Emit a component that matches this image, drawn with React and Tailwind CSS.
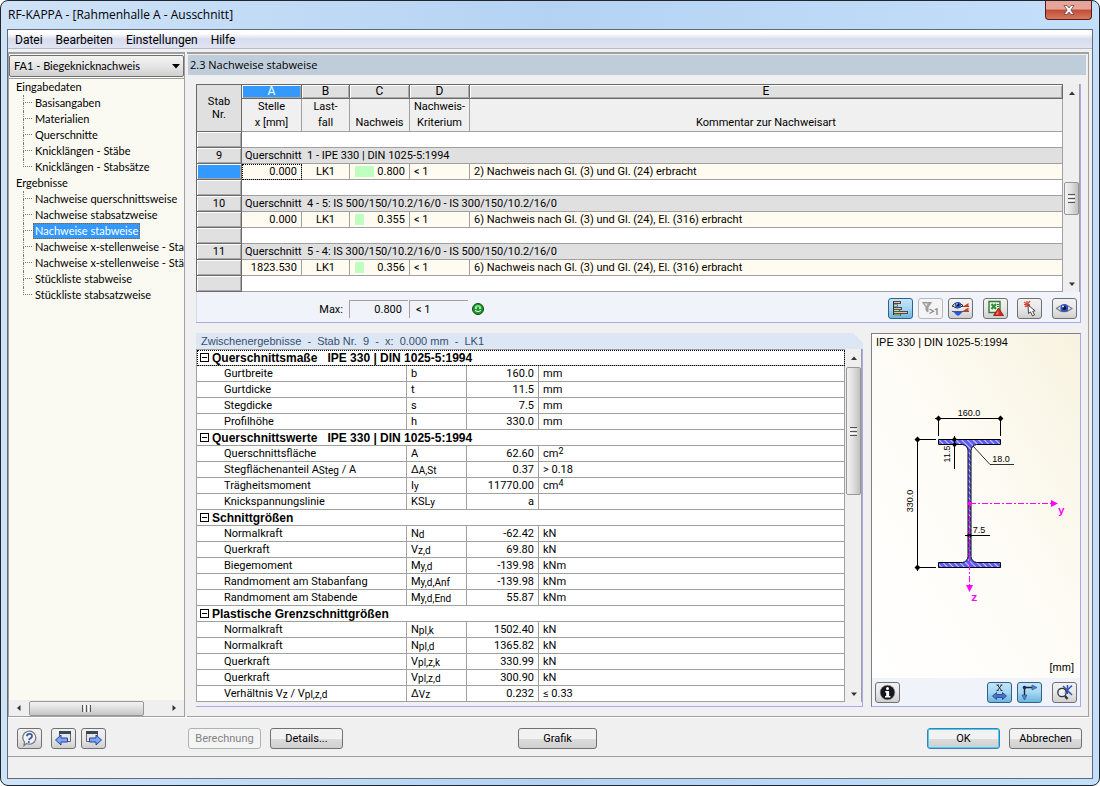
import React, { useState } from "react";
import clsx from "clsx";

const inputPages = [
  "Basisangaben",
  "Materialien",
  "Querschnitte",
  "Knicklängen - Stäbe",
  "Knicklängen - Stabsätze",
];

const resultPages = [
  "Nachweise querschnittsweise",
  "Nachweise stabsatzweise",
  "Nachweise stabweise",
  "Nachweise x-stellenweise - Stab",
  "Nachweise x-stellenweise - Stäb",
  "Stückliste stabweise",
  "Stückliste stabsatzweise",
];

const members = [
  {
    nr: 9,
    section: "1 - IPE 330 | DIN 1025-5:1994",
    x: "0.000",
    lc: "LK1",
    ratio: "0.800",
    comment: "2) Nachweis nach Gl. (3) und Gl. (24) erbracht",
    active: true,
  },
  {
    nr: 10,
    section: "4 - 5: IS 500/150/10.2/16/0 - IS 300/150/10.2/16/0",
    x: "0.000",
    lc: "LK1",
    ratio: "0.355",
    comment: "6) Nachweis nach Gl. (3) und Gl. (24), El. (316) erbracht",
  },
  {
    nr: 11,
    section: "5 - 4: IS 300/150/10.2/16/0 - IS 500/150/10.2/16/0",
    x: "1823.530",
    lc: "LK1",
    ratio: "0.356",
    comment: "6) Nachweis nach Gl. (3) und Gl. (24), El. (316) erbracht",
  },
];

function Sub({ children }) {
  return <span className="relative top-px text-[10px] leading-none">{children}</span>;
}

function Sup({ children }) {
  return <span className="relative bottom-[3px] text-[9px] leading-none">{children}</span>;
}

const details = [
  {
    title: "Querschnittsmaße",
    extra: "IPE 330 | DIN 1025-5:1994",
    rows: [
      ["Gurtbreite", "b", "160.0", "mm"],
      ["Gurtdicke", "t", "11.5", "mm"],
      ["Stegdicke", "s", "7.5", "mm"],
      ["Profilhöhe", "h", "330.0", "mm"],
    ],
  },
  {
    title: "Querschnittswerte",
    extra: "IPE 330 | DIN 1025-5:1994",
    rows: [
      ["Querschnittsfläche", "A", "62.60", <>cm<Sup>2</Sup></>],
      [<>Stegflächenanteil A<Sub>Steg</Sub> / A</>, <>Δ<Sub>A,St</Sub></>, "0.37", "> 0.18"],
      ["Trägheitsmoment", <>I<Sub>y</Sub></>, "11770.00", <>cm<Sup>4</Sup></>],
      ["Knickspannungslinie", <>KSL<Sub>y</Sub></>, "a", ""],
    ],
  },
  {
    title: "Schnittgrößen",
    rows: [
      ["Normalkraft", <>N<Sub>d</Sub></>, "-62.42", "kN"],
      ["Querkraft", <>V<Sub>z,d</Sub></>, "69.80", "kN"],
      ["Biegemoment", <>M<Sub>y,d</Sub></>, "-139.98", "kNm"],
      ["Randmoment am Stabanfang", <>M<Sub>y,d,Anf</Sub></>, "-139.98", "kNm"],
      ["Randmoment am Stabende", <>M<Sub>y,d,End</Sub></>, "55.87", "kNm"],
    ],
  },
  {
    title: "Plastische Grenzschnittgrößen",
    rows: [
      ["Normalkraft", <>N<Sub>pl,k</Sub></>, "1502.40", "kN"],
      ["Normalkraft", <>N<Sub>pl,d</Sub></>, "1365.82", "kN"],
      ["Querkraft", <>V<Sub>pl,z,k</Sub></>, "330.99", "kN"],
      ["Querkraft", <>V<Sub>pl,z,d</Sub></>, "300.90", "kN"],
      [<>Verhältnis V<Sub>z</Sub> / V<Sub>pl,z,d</Sub></>, <>Δ<Sub>Vz</Sub></>, "0.232", "≤ 0.33"],
    ],
  },
];

/* ---------- icons ---------- */

function Icon({ children }) {
  return (
    <svg width="19" height="17" viewBox="0 0 19 17" aria-hidden="true" className="shrink-0">
      {children}
    </svg>
  );
}

const icons = {
  bars: (
    <Icon>
      <path d="M2.500 1v14" stroke="#333" />
      <path d="M3 2.500h7M3 8.500h8M3 12.500h14" stroke="#4a4a4a" strokeWidth="3" />
      <path d="M3 2.500h6M3 8.500h7M3 12.500h13" stroke="#f6b9a8" />
      <path d="M3 5.500h4M3 10.500h6M3 15h7" stroke="#4a6a4a" strokeWidth="2" />
      <path d="M3 5.500h3M3 10.500h5M3 15h6" stroke="#a8e8b0" />
    </Icon>
  ),
  filter: (
    <Icon>
      <path d="M1.500 2.500h9L7 7v5L5 10.500V7z" fill="#a5a5a5" stroke="#999" />
      <path d="M3.500 3.500h3L5.500 6z" fill="#eee" />
      <path d="M8.500 9l4 2.200-4 2.300" fill="none" stroke="#8a8a8a" strokeWidth="1.300" />
      <text x="13" y="15" fontSize="9" fontWeight="bold" fill="#8a8a8a">
        1
      </text>
    </Icon>
  ),
  eyeDiagram: (
    <Icon>
      <path d="M1 6.500h17M1 11.500h17" stroke="#333" strokeWidth=".8" />
      <path d="M12 6.500L17.500 3v3.500zM11 11.500l6.500-4v4z" fill="#d83a28" />
      <path d="M2 11.500h10L8 15.500H6z" fill="#2a56d8" />
      <path d="M1.500 5.500Q6 0 12 5.500 6 10.500 1.500 5.500z" fill="#dce8fa" stroke="#222" />
      <circle cx="7" cy="5" r="3" fill="#2457c8" />
      <circle cx="7" cy="5" r="1.300" fill="#0a0a28" />
      <circle cx="6" cy="4" r=".7" fill="#fff" />
    </Icon>
  ),
  excel: (
    <Icon>
      <path d="M3 1.500h11v11H3z" fill="#edf6ea" stroke="#2f7a35" strokeWidth="1.400" />
      <path d="M5.500 4l4.500 5M10 4L5.500 9" stroke="#2f8a38" strokeWidth="2" />
      <path d="M11 4.500h2M11 6.500h2" stroke="#2f7a35" />
      <path d="M12.500 8l5 7.500h-10z" fill="#d82a1a" stroke="#8a1208" strokeWidth=".8" />
      <path d="M9.500 14.500l3-4.500v4.500z" fill="#f3745e" />
    </Icon>
  ),
  pick: (
    <Icon>
      <path d="M4 2l6 4M10 1L5 7M4 4.500h6M7 1v6" stroke="#e04535" strokeWidth="1.200" />
      <path d="M8 5l.5 8.500 2-1.600 2 4 2-1-1.800-3.600 2.400-.5z" fill="#fff" stroke="#333" strokeWidth=".9" />
    </Icon>
  ),
  eye: (
    <Icon>
      <path d="M1.500 8.500Q9 1.500 17 8.500 9 15 1.500 8.500z" fill="#e6eaf5" stroke="#777a82" strokeWidth="1.100" />
      <circle cx="9.300" cy="8" r="4" fill="#3151bd" />
      <circle cx="9.300" cy="8" r="1.900" fill="#11152f" />
      <circle cx="8" cy="6.500" r="1" fill="#dfe8ff" />
    </Icon>
  ),
  info: (
    <Icon>
      <circle cx="9.500" cy="8.500" r="7.300" fill="#15171c" stroke="#888" strokeWidth=".6" />
      <circle cx="9.500" cy="4.600" r="1.500" fill="#fff" />
      <path d="M7.200 7h3.900v5h1.300v1.600H7V12h1.200V8.500H7.200z" fill="#fff" />
    </Icon>
  ),
  dimension: (
    <Icon>
      <path d="M7.500 1l4 5.500M11.500 1l-4 5.500M6.500 1H9M10.500 1h2M6.500 6.500h2M10.500 6.500h2" stroke="#222" strokeWidth=".9" />
      <path d="M2.500 12l4-3.500v2h6v-2l4 3.500-4 3.500v-2h-6v2z" fill="#4a70c8" stroke="#22418f" strokeWidth=".8" />
    </Icon>
  ),
  axes: (
    <Icon>
      <path d="M4.500 3.500H14M4.500 3.500V13" stroke="#222" strokeWidth="1.400" fill="none" />
      <path d="M12 1l5 2.500L12 6zM2 11l2.500 5L7 11z" fill="#4b83d8" stroke="#31538f" strokeWidth=".7" />
      <circle cx="4.500" cy="3.500" r="1.800" fill="#122b70" />
    </Icon>
  ),
  zoomAll: (
    <Icon>
      <path d="M8 2l9 9M17 1.500l-8 8M12.500 1v9" stroke="#3158b8" strokeWidth="1.600" />
      <circle cx="7" cy="8.500" r="4.200" fill="#e9f1fb" fillOpacity=".8" stroke="#333" strokeWidth="1.300" />
      <path d="M5 9l3-3" stroke="#fff" strokeWidth="1.400" />
      <path d="M10 12l2.500 3" stroke="#333" strokeWidth="2.400" />
    </Icon>
  ),
  help: (
    <Icon>
      <path d="M4 15.500l2.500-2A6.500 6.500 0 1 0 4.500 12z" fill="#f0f3f9" stroke="#70747c" strokeWidth="1.200" />
      <path d="M7 6.200Q7 3.800 9.500 3.800T12 6q0 1.400-1.400 2.200T9 10" fill="none" stroke="#3a5a98" strokeWidth="1.800" />
      <circle cx="8.800" cy="12" r="1.100" fill="#3a5a98" />
    </Icon>
  ),
  previous: (
    <Icon>
      <path d="M5.500 1.500h11v10h-11z" fill="#e4e6ea" stroke="#666" />
      <path d="M5 1h12v3H5z" fill="#3c4656" />
      <path d="M1.500 10l5.500-5v3h6.500v4H7v3z" fill="#7fa5f2" stroke="#2343a0" />
    </Icon>
  ),
  next: (
    <Icon>
      <path d="M2.500 1.500h11v10h-11z" fill="#e4e6ea" stroke="#666" />
      <path d="M2 1h12v3H2z" fill="#3c4656" />
      <path d="M17.500 10L12 5v3H5.500v4H12v3z" fill="#7fa5f2" stroke="#2343a0" />
    </Icon>
  ),
};

function IconButton({ label, icon, pressed, disabled, className }) {
  return (
    <button
      aria-label={label}
      aria-pressed={pressed}
      disabled={disabled}
      className={clsx(
        "flex h-[21px] w-[25px] shrink-0 items-center justify-center rounded-[3px] border",
        pressed
          ? "border-[#2c628b] bg-linear-to-b from-[#c5e4f7] via-[#a5d6f2] to-[#6cb5dd]"
          : disabled
            ? "border-[#b5b8bc] bg-[#f4f4f4]"
            : "border-[#707070] bg-linear-to-b from-[#f2f2f2] via-[#e8e8e8] to-[#cfcfcf]",
        className,
      )}
    >
      {icons[icon]}
    </button>
  );
}

function PushButton({ children, disabled, primary, className }) {
  return (
    <button
      disabled={disabled}
      className={clsx(
        "h-[21px] shrink-0 rounded-[3px] border leading-[19px]",
        disabled
          ? "border-[#adb2b5] bg-[#f4f4f4] text-[#838383]"
          : "bg-linear-to-b from-[#f2f2f2] from-50% via-[#dddddd] via-50% to-[#cfcfcf]",
        primary && "border-[#3c7fb1] ring-1 ring-[#48d0f4] ring-inset",
        !disabled && !primary && "border-[#707070]",
        className,
      )}
    >
      {children}
    </button>
  );
}

/* ---------- scroll bars ---------- */

function Arrow({ dir }) {
  const paths = {
    up: "M1 6l3-3.500 3 3.500z",
    down: "M1 2.500h6L4 6z",
    left: "M5.500 1v6L2 4z",
    right: "M2.500 1v6L6 4z",
  };
  return (
    <svg width="8" height="8" viewBox="0 0 8 8" aria-hidden="true">
      <path d={paths[dir]} fill="#333" />
    </svg>
  );
}

function VerticalScroll({ before, thumb }) {
  return (
    <div className="flex w-[17px] shrink-0 flex-col items-center border-r border-[#a0a0a0] bg-[#efefef] pl-px">
      <button aria-label="Nach oben" className="flex h-[17px] w-full items-center justify-center">
        <Arrow dir="up" />
      </button>
      <div className={clsx("w-full", before)} />
      <div
        className={clsx(
          "flex w-full shrink-0 flex-col items-center justify-center gap-px rounded-[2px] border border-[#979797] bg-linear-to-r from-[#f3f3f3] via-[#dedede] to-[#c0c0c0]",
          thumb,
        )}
      >
        <i className="h-px w-[7px] bg-[#555]" />
        <i className="h-px w-[7px] bg-white" />
        <i className="h-px w-[7px] bg-[#555]" />
        <i className="h-px w-[7px] bg-white" />
        <i className="h-px w-[7px] bg-[#555]" />
      </div>
      <div className="flex-1" />
      <button aria-label="Nach unten" className="flex h-[17px] w-full items-center justify-center">
        <Arrow dir="down" />
      </button>
    </div>
  );
}

/* ---------- navigation ---------- */

function TreeGroup({ title, pages, current, onSelect }) {
  return (
    <li>
      <p className="h-4 pl-[7px] leading-4">{title}</p>
      <ul>
        {pages.map((page, i) => (
          <li key={page} className="flex h-4 pl-[14px]">
            <span className="mr-px w-[9px] shrink-0">
              <i className="block h-2 border-b border-l border-dotted border-[#777]" />
              {i < pages.length - 1 && <i className="block h-2 border-l border-dotted border-[#777]" />}
            </span>
            <a
              href="#"
              onClick={() => onSelect(page)}
              className={clsx(
                "border px-px leading-[14px] whitespace-nowrap",
                page === current
                  ? "border-dotted border-[#a05a10] bg-[#3399ff] text-white"
                  : "border-transparent",
              )}
            >
              {page}
            </a>
          </li>
        ))}
      </ul>
    </li>
  );
}

function Sidebar() {
  const [current, setCurrent] = useState("Nachweise stabweise");
  return (
    <nav className="flex w-[177px] shrink-0 flex-col border border-t-2 border-[#a0a0a0] bg-[#fafaf2] font-[Lato,'Liberation_Sans',sans-serif]">
      <div className="relative mt-px">
        <select
          aria-label="Bemessungsfall"
          className="h-[22px] w-full appearance-none rounded-[2px] border border-[#707070] bg-linear-to-b from-[#f3f3f3] via-[#e6e6e6] to-[#d0d0d0] pl-1"
        >
          <option>FA1 - Biegeknicknachweis</option>
        </select>
        <svg className="pointer-events-none absolute top-[9px] right-[4px]" width="8" height="5" viewBox="0 0 8 5" aria-hidden="true">
          <path d="M0 0h8L4 4.500z" fill="#000" />
        </svg>
      </div>
      <ul className="mt-px flex-1 overflow-hidden border-t border-[#a0a0a0]">
        <TreeGroup title="Eingabedaten" pages={inputPages} current={current} onSelect={setCurrent} />
        <TreeGroup title="Ergebnisse" pages={resultPages} current={current} onSelect={setCurrent} />
      </ul>
      <div className="flex h-4 items-center bg-[#efefef]">
        <button aria-label="Nach links" className="flex h-full w-5 items-center justify-center">
          <Arrow dir="left" />
        </button>
        <div className="flex h-[15px] w-[115px] items-center justify-center gap-px rounded-[2px] border border-[#979797] bg-linear-to-b from-[#f3f3f3] via-[#dedede] to-[#c6c6c6]">
          <i className="h-[7px] w-px bg-[#555]" />
          <i className="h-[7px] w-px bg-white" />
          <i className="h-[7px] w-px bg-[#555]" />
          <i className="h-[7px] w-px bg-white" />
          <i className="h-[7px] w-px bg-[#555]" />
        </div>
        <div className="flex-1" />
        <button aria-label="Nach rechts" className="flex h-full w-5 items-center justify-center">
          <Arrow dir="right" />
        </button>
      </div>
    </nav>
  );
}

/* ---------- result table ---------- */

const line = "border-r border-b border-[#a0a0a0]";
const rowHead =
  "h-4 border-r border-b border-[#696969] bg-[#e0e0e0] p-0 text-center font-normal leading-[14px] shadow-[inset_1px_1px_#fff,inset_-1px_-1px_#a8a8a8]";

function EmptyRow() {
  return (
    <tr>
      <th className={rowHead} />
      <td colSpan={5} className={clsx(line, "bg-white p-0")} />
    </tr>
  );
}

function ResultTable() {
  return (
    <table className="w-full table-fixed border-separate border-spacing-0 border-t border-l border-[#696969]">
      <colgroup>
        <col className="w-[45px]" />
        <col className="w-[60px]" />
        <col className="w-[48px]" />
        <col className="w-[60px]" />
        <col className="w-[60px]" />
        <col />
      </colgroup>
      <thead>
        <tr className="h-[14px] leading-[13px]">
          <th rowSpan={2} className="border-r border-b border-[#696969] bg-[#e0e0e0] p-0 pb-px font-normal">
            Stab
            <br />
            Nr.
          </th>
          {["A", "B", "C", "D", "E"].map((c) => (
            <th
              key={c}
              className={clsx(
                "border-r border-b border-[#696969] p-0 text-[12px] font-normal shadow-[inset_1px_1px_#fff,inset_-1px_-1px_#a8a8a8]",
                c === "A" ? "bg-[#3399ff] text-white" : "bg-[#e0e0e0]",
              )}
            >
              {c}
            </th>
          ))}
        </tr>
        <tr className="h-[33px] bg-[#f0f0f0] align-top leading-4">
          <th className={clsx(line, "p-0 font-normal")}>Stelle<br />x [mm]</th>
          <th className={clsx(line, "p-0 font-normal")}>Last-<br />fall</th>
          <th className={clsx(line, "p-0 font-normal")}><br />Nachweis</th>
          <th className={clsx(line, "p-0 font-normal")}>Nachweis-<br />Kriterium</th>
          <th className={clsx(line, "p-0 font-normal")}><br />Kommentar zur Nachweisart</th>
        </tr>
      </thead>
      <tbody className="leading-[15px]">
        <EmptyRow />
        {members.map((m) => (
          <React.Fragment key={m.nr}>
            <tr>
              <th className={rowHead}>{m.nr}</th>
              <td colSpan={5} className={clsx(line, "bg-[#e0e0e0] p-0 pl-[3px] whitespace-pre")}>
                Querschnitt{"  "}{m.section}
              </td>
            </tr>
            <tr className="bg-[#fffbf0]">
              <th className={clsx(rowHead, m.active && "bg-[#3399ff]!")} />
              <td
                className={clsx(
                  line,
                  "p-0 pr-1 text-right",
                  m.active && "outline outline-dotted outline-black -outline-offset-1",
                )}
              >
                {m.x}
              </td>
              <td className={clsx(line, "p-0 text-center")}>{m.lc}</td>
              <td className={clsx(line, "p-0")}>
                <div className="flex items-center justify-between pr-1 pl-[5px]">
                  <span className="h-[11px] bg-[#bfffbf]" style={{ width: Math.round(m.ratio * 24) }} />
                  {m.ratio}
                </div>
              </td>
              <td className={clsx(line, "p-0 pl-1")}>&lt; 1</td>
              <td className={clsx(line, "p-0 pl-1")}>{m.comment}</td>
            </tr>
            <EmptyRow />
          </React.Fragment>
        ))}
      </tbody>
    </table>
  );
}

function ResultPanel() {
  return (
    <section className="border-r border-b border-[#a9a9f0] bg-[#f0f4fa]">
      <div className="flex">
        <div className="min-w-0 flex-1">
          <ResultTable />
        </div>
        <VerticalScroll before="h-[81px]" thumb="h-[33px]" />
      </div>
      <div className="flex h-[30px] items-center border-l border-[#d5def0] pt-[3px] pr-[3px]">
        <span className="h-[18px] w-[146px] text-right leading-[19px]">Max:</span>
        <output className="ml-[6px] h-[18px] w-[59px] border-t border-l border-[#a0a0a0] pr-[6px] text-right leading-[17px]">
          0.800
        </output>
        <output className="ml-px h-[18px] w-[59px] border-t border-l border-[#a0a0a0] pl-[6px] leading-[17px]">
          &lt; 1
        </output>
        <svg className="ml-1" width="12" height="12" viewBox="0 0 12 12" aria-hidden="true">
          <circle cx="6" cy="6" r="5.500" fill="#1c9a2c" stroke="#0c4a14" />
          <path d="M2.500 4Q6 0 9.500 4z" fill="#8be08f" />
          <circle cx="4" cy="5" r=".9" fill="#fff" />
          <circle cx="8" cy="5" r=".9" fill="#fff" />
          <path d="M3 7.500q3 2.500 6 0" fill="none" stroke="#fff" />
        </svg>
        <div className="flex-1" />
        <IconButton label="Farbbalken" icon="bars" pressed />
        <IconButton label="Nur Überschreitungen" icon="filter" disabled className="ml-[5px]" />
        <IconButton label="Ergebnisverläufe" icon="eyeDiagram" className="ml-[5px]" />
        <IconButton label="Export nach Excel" icon="excel" className="ml-[10px]" />
        <IconButton label="Stab wählen" icon="pick" className="ml-[9px]" />
        <IconButton label="Sichtmodus" icon="eye" className="ml-[10px]" />
      </div>
    </section>
  );
}

/* ---------- intermediate results ---------- */

function DetailPanel() {
  return (
    <section className="flex min-w-0 flex-1 flex-col">
      <h2 className="h-4 bg-[#dce6f4] pl-[5px] font-['Liberation_Sans',Arial,sans-serif] text-[11px] leading-4 whitespace-pre text-[#34506e] [clip-path:polygon(0_0,calc(100%-10px)_0,100%_10px,100%_100%,0_100%)]">
        {"Zwischenergebnisse  -  Stab Nr.  9  -  x:  0.000 mm  -  LK1"}
      </h2>
      <div className="flex flex-1 border-r border-b border-[#a9a9f0] pb-1">
        <div className="min-w-0 flex-1">
          <table className="w-full table-fixed border-separate border-spacing-0 border-t border-l border-[#a0a0a0] bg-white leading-[14px]">
            <colgroup>
              <col className="w-[210px]" />
              <col className="w-[60px]" />
              <col className="w-[72px]" />
              <col />
            </colgroup>
            {details.map((group, i) => (
              <tbody key={group.title}>
                <tr className={clsx(i === 0 && "outline outline-dotted outline-black -outline-offset-1")}>
                  <th
                    colSpan={4}
                    className={clsx(
                      line,
                      "h-4 p-0 text-left font-['Liberation_Sans',Arial,sans-serif] text-[12px] leading-[14px]",
                    )}
                  >
                    <div className="flex items-center whitespace-pre">
                      <button
                        aria-label="Zuklappen"
                        className="mr-[3px] ml-[3px] flex size-[9px] items-center justify-center border border-black"
                      >
                        <i className="h-px w-[5px] bg-black" />
                      </button>
                      {group.title}
                      {group.extra && "   " + group.extra}
                    </div>
                  </th>
                </tr>
                {group.rows.map((row, j) => (
                  <tr key={j}>
                    <td className={clsx(line, "h-4 p-0 pl-[27px]")}>{row[0]}</td>
                    <td className={clsx(line, "h-4 p-0 pl-1")}>{row[1]}</td>
                    <td className={clsx(line, "h-4 p-0 pr-1 text-right")}>{row[2]}</td>
                    <td className={clsx(line, "h-4 p-0 pl-1")}>{row[3]}</td>
                  </tr>
                ))}
              </tbody>
            ))}
          </table>
        </div>
        <VerticalScroll before="h-px" thumb="h-[128px]" />
      </div>
    </section>
  );
}

/* ---------- cross-section ---------- */

function SectionDrawing() {
  return (
    <svg className="block" width="208" height="344" viewBox="0 0 208 344" fontFamily="Liberation Sans, sans-serif" fontSize="9">
      <defs>
        <pattern id="hatch" width="4" height="4" patternUnits="userSpaceOnUse" patternTransform="rotate(-45)">
          <rect width="4" height="4" fill="#5a5af5" />
          <path d="M0 0v4" stroke="#c9c9ff" strokeWidth="2" />
        </pattern>
      </defs>
      <text x="4" y="12" fontSize="11">IPE 330 | DIN 1025-5:1994</text>

      <path
        d="M66.500 105.500h62v5h-24q-5 1-5.500 6v106q.5 5 5.500 6h24v5h-62v-5h24q5-1 5.500-6v-106q-.5-5-5.500-6h-24z"
        fill="url(#hatch)"
        stroke="#000"
      />

      <g stroke="#000" fill="none">
        <path d="M63 84.500h68M66.500 82v20M128.500 82v20" />
        <path d="M45.500 103v134M43 105.500h21M43 233.500h21" />
        <path d="M82.500 102v33" />
        <path d="M101 112l17 18.500h24" strokeWidth=".8" />
        <path d="M93 201.500h25" />
      </g>
      <g>
        <path d="M66.500 81.500l3 3-3 3-3-3zM128.500 81.500l3 3-3 3-3-3zM45.500 102.500l3 3-3 3-3-3zM45.500 230.500l3 3-3 3-3-3z" />
        <path d="M82.500 102.500l2.500 3-2.500 3-2.500-3zM82.500 108l2.500 2.500-2.500 3-2.500-3zM97.500 199l3 2.500-3 2.500-3-2.500z" />
      </g>
      <text x="97" y="82" textAnchor="middle">160.0</text>
      <text x="129" y="128" textAnchor="middle">18.0</text>
      <text x="107" y="199" textAnchor="middle">7.5</text>
      <text transform="translate(78 120) rotate(-90)" textAnchor="middle">11.5</text>
      <text transform="translate(41 167) rotate(-90)" textAnchor="middle">330.0</text>

      <g stroke="#f0f" fill="none" strokeDasharray="6 2 2 2">
        <path d="M98 169.500h81" />
        <path d="M97.500 170v82" />
      </g>
      <g fill="#f0f">
        <circle cx="97.500" cy="169.500" r="2" />
        <path d="M179 166l7 3.500-7 3.500zM94 251h7l-3.500 7z" />
        <g fontFamily="Liberation Mono, monospace" fontSize="11" fontWeight="bold">
          <text x="186" y="180">y</text>
          <text x="99" y="267">z</text>
        </g>
      </g>
      <text x="202" y="337" fontSize="11" textAnchor="end">[mm]</text>
    </svg>
  );
}

function SectionPanel() {
  return (
    <section className="flex w-[210px] shrink-0 flex-col border border-t-[#808080] border-r-[#a9a9f0] border-b-[#a9a9f0] border-l-[#808080]">
      <div className="flex-1 bg-linear-to-tr from-white via-[#fefcf6] to-[#f8f3e0]">
        <SectionDrawing />
      </div>
      <div className="flex h-7 items-center bg-[#f0f4fa] px-[3px]">
        <IconButton label="Information" icon="info" />
        <div className="flex-1" />
        <IconButton label="Bemaßung" icon="dimension" pressed />
        <IconButton label="Achsen" icon="axes" pressed className="ml-[5px]" />
        <IconButton label="Gesamtansicht" icon="zoomAll" className="ml-[10px]" />
      </div>
    </section>
  );
}

export default function App() {
  return (
    <div className="bg-white">
      <div className="flex min-h-screen flex-col rounded-lg border border-[#22262c] bg-linear-to-r from-[#cfe3f8] via-[#b4d3f3] to-[#c4dffa] font-[Roboto,'Liberation_Sans',sans-serif] text-[11px] text-black">
        <header className="flex h-7 items-start justify-between pr-[7px] pl-[7px]">
          <h1 className="font-['Open_Sans','Noto_Sans',sans-serif] text-[12px] leading-7">
            RF-KAPPA - [Rahmenhalle A - Ausschnitt]
          </h1>
          <button
            aria-label="Schließen"
            className="flex h-[19px] w-[47px] items-center justify-center rounded-b-[4px] border border-t-0 border-[#5a1a18] bg-linear-to-b from-[#e6a598] from-45% via-[#c14b38] via-50% to-[#d67a5e]"
          >
            <svg width="12" height="10" viewBox="0 0 12 10" aria-hidden="true">
              <path d="M1 .5h3l2 2.500 2-2.500h3L7.800 5 11 9.500H8L6 7 4 9.500H1L4.200 5z" fill="#fff" stroke="#5b4a50" strokeWidth=".8" />
            </svg>
          </button>
        </header>

        <div className="mx-[6px] mb-[6px] flex flex-1 flex-col border border-[#5f6b78] bg-[#f0f0f0]">
          <nav className="flex h-[19px] items-center gap-[13px] border-b border-[#b6bccc] bg-linear-to-b from-white from-20% via-[#d8dcee] via-50% to-[#e0e4f2] pt-[2px] pl-[7px] text-[12px] leading-4">
            <button>Datei</button>
            <button>Bearbeiten</button>
            <button>Einstellungen</button>
            <button>Hilfe</button>
          </nav>

          <div className="mt-[3px] mr-[3px] flex flex-1">
            <Sidebar />
            <main className="ml-[2px] flex min-w-0 flex-1 flex-col border-t-2 border-r border-b border-[#a0a0a0]">
              <h2 className="mt-px mr-[2px] ml-px h-5 bg-[#bfcddb] pl-[2px] font-['Open_Sans','Noto_Sans',sans-serif] text-[11px] leading-5">
                2.3 Nachweise stabweise
              </h2>
              <div className="flex flex-1 flex-col gap-[10px] py-[9px] pr-[7px] pl-[9px]">
                <ResultPanel />
                <div className="flex flex-1 gap-2">
                  <DetailPanel />
                  <SectionPanel />
                </div>
              </div>
            </main>
          </div>

          <footer>
            <div className="flex h-[39px] items-center border-t border-white pt-[3px] pr-[10px] pl-[9px]">
              <IconButton label="Hilfe" icon="help" />
              <IconButton label="Vorherige Maske" icon="previous" className="ml-[9px]" />
              <IconButton label="Nächste Maske" icon="next" className="ml-[5px]" />
              <PushButton disabled className="ml-[82px] w-[73px]">Berechnung</PushButton>
              <PushButton className="ml-[9px] w-[73px]">Details...</PushButton>
              <div className="flex flex-1 justify-center pr-[155px]">
                <PushButton className="w-[79px]">Grafik</PushButton>
              </div>
              <PushButton primary className="w-[73px]">OK</PushButton>
              <PushButton className="ml-[9px] w-[73px]">Abbrechen</PushButton>
            </div>
            <div className="h-[22px] border-t border-[#a0a0a0]" />
          </footer>
        </div>
      </div>
    </div>
  );
}
